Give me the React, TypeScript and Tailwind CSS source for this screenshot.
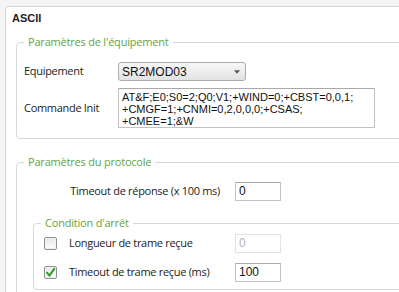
import React from "react";

const ui = { fontFamily: '"Open Sans", "Noto Sans", sans-serif' };
const arial = { fontFamily: '"Liberation Sans", Arial, sans-serif' };

function Check({ checked }: { checked?: boolean }) {
  return (
    <div className="relative w-[13px] h-[13px] shrink-0 border border-[#8e8f8f] rounded-[2px] bg-gradient-to-b from-[#e6e6e6] to-[#fdfdfd] shadow-[inset_0_0_0_1px_#f4f4f4]">
      {checked && (
        <svg viewBox="0 0 13 13" className="absolute -left-px -top-px w-[13px] h-[13px]">
          <path d="M3 6.6 L5.4 9.6 L10.2 2.8" fill="none" stroke="#2f9a2f" strokeWidth="2" strokeLinecap="round" strokeLinejoin="round" />
        </svg>
      )}
    </div>
  );
}

function Legend({ children, className = "" }: { children: React.ReactNode; className?: string }) {
  return (
    <legend className={"px-[4px] text-[11px] leading-[14px] tracking-[-0.2px] text-[#62a33f] " + className} style={ui}>
      {children}
    </legend>
  );
}

const label = "text-[11px] tracking-[-0.3px] text-[#222]";

export default function App() {
  return (
    <div className="w-[399px] h-[292px] overflow-hidden bg-[#f4f4f4] pt-[6px] pl-[5px]">
      <div className="w-[420px] h-[320px] bg-white border border-[#d3d3d3] rounded-tl-[4px]">
        <div className="h-[28px] pt-[5px] pl-[6px] text-[11px] leading-[13px] font-bold text-[#1e1e1e]" style={arial}>
          ASCII
        </div>

        <fieldset className="ml-[10px] w-[400px] border border-[#d6d6d6] rounded-[4px] pl-[7px] pt-[13px] pb-[10px]">
          <Legend>Paramètres de l'équipement</Legend>
          <div className="flex items-center h-[19px]">
            <div className={"w-[94px] " + label} style={ui}>Equipement</div>
            <div className="w-[128px] h-[19px] border border-[#acacac] rounded-[3px] bg-gradient-to-b from-[#f7f7f7] to-[#e2e2e2] flex items-center pl-[3px] pr-[5px]">
              <span className="flex-1 text-[12px] leading-[14px] text-[#111]" style={arial}>SR2MOD03</span>
              <svg viewBox="0 0 7 4" className="w-[6px] h-[4px]">
                <path d="M0 0 H7 L3.5 4 Z" fill="#555" />
              </svg>
            </div>
          </div>
          <div className="flex items-center mt-[7px]">
            <div className={"w-[94px] " + label} style={ui}>Commande Init</div>
            <div className="w-[257px] h-[40px] border border-[#c3c3c3] border-t-[#a9a9a9] bg-white pl-[3px] pt-[2px] text-[11px] leading-[12px] text-[#111]" style={arial}>
              <div>AT&amp;F;E0;S0=2;Q0;V1;+WIND=0;+CBST=0,0,1;</div>
              <div>+CMGF=1;+CNMI=0,2,0,0,0;+CSAS;</div>
              <div>+CMEE=1;&amp;W</div>
            </div>
          </div>
        </fieldset>

        <fieldset className="ml-[10px] mt-[16px] w-[400px] h-[200px] border border-[#d6d6d6] rounded-[4px] pl-[7px] pt-[13px]">
          <Legend>Paramètres du protocole</Legend>
          <div className="flex items-center h-[19px]">
            <div className={"w-[196px] text-right " + label} style={ui}>Timeout de réponse (x 100 ms)</div>
            <div className="ml-[15px] w-[46px] h-[19px] border border-[#c3c3c3] border-t-[#a9a9a9] bg-white pl-[3px] text-[12px] leading-[17px] text-[#111]" style={arial}>0</div>
          </div>

          <fieldset className="ml-[9px] mt-[15px] w-[380px] border border-[#d6d6d6] rounded-[4px] pl-[10px] pt-[4px] pb-[7px]">
            <Legend className="-ml-[3px]">Condition d'arrêt</Legend>
            <div className="flex items-center h-[19px]">
              <Check />
              <div className={"ml-[12px] w-[166px] " + label} style={ui}>Longueur de trame reçue</div>
              <div className="w-[46px] h-[19px] border border-[#e2e2e2] bg-white pl-[3px] text-[12px] leading-[17px] text-[#b4b4b4]" style={arial}>0</div>
            </div>
            <div className="flex items-center h-[19px] mt-[10px]">
              <Check checked />
              <div className={"ml-[12px] w-[166px] " + label} style={ui}>Timeout de trame reçue (ms)</div>
              <div className="w-[46px] h-[19px] border border-[#c3c3c3] border-t-[#a9a9a9] bg-white pl-[3px] text-[12px] leading-[17px] text-[#111]" style={arial}>100</div>
            </div>
          </fieldset>
        </fieldset>
      </div>
    </div>
  );
}
